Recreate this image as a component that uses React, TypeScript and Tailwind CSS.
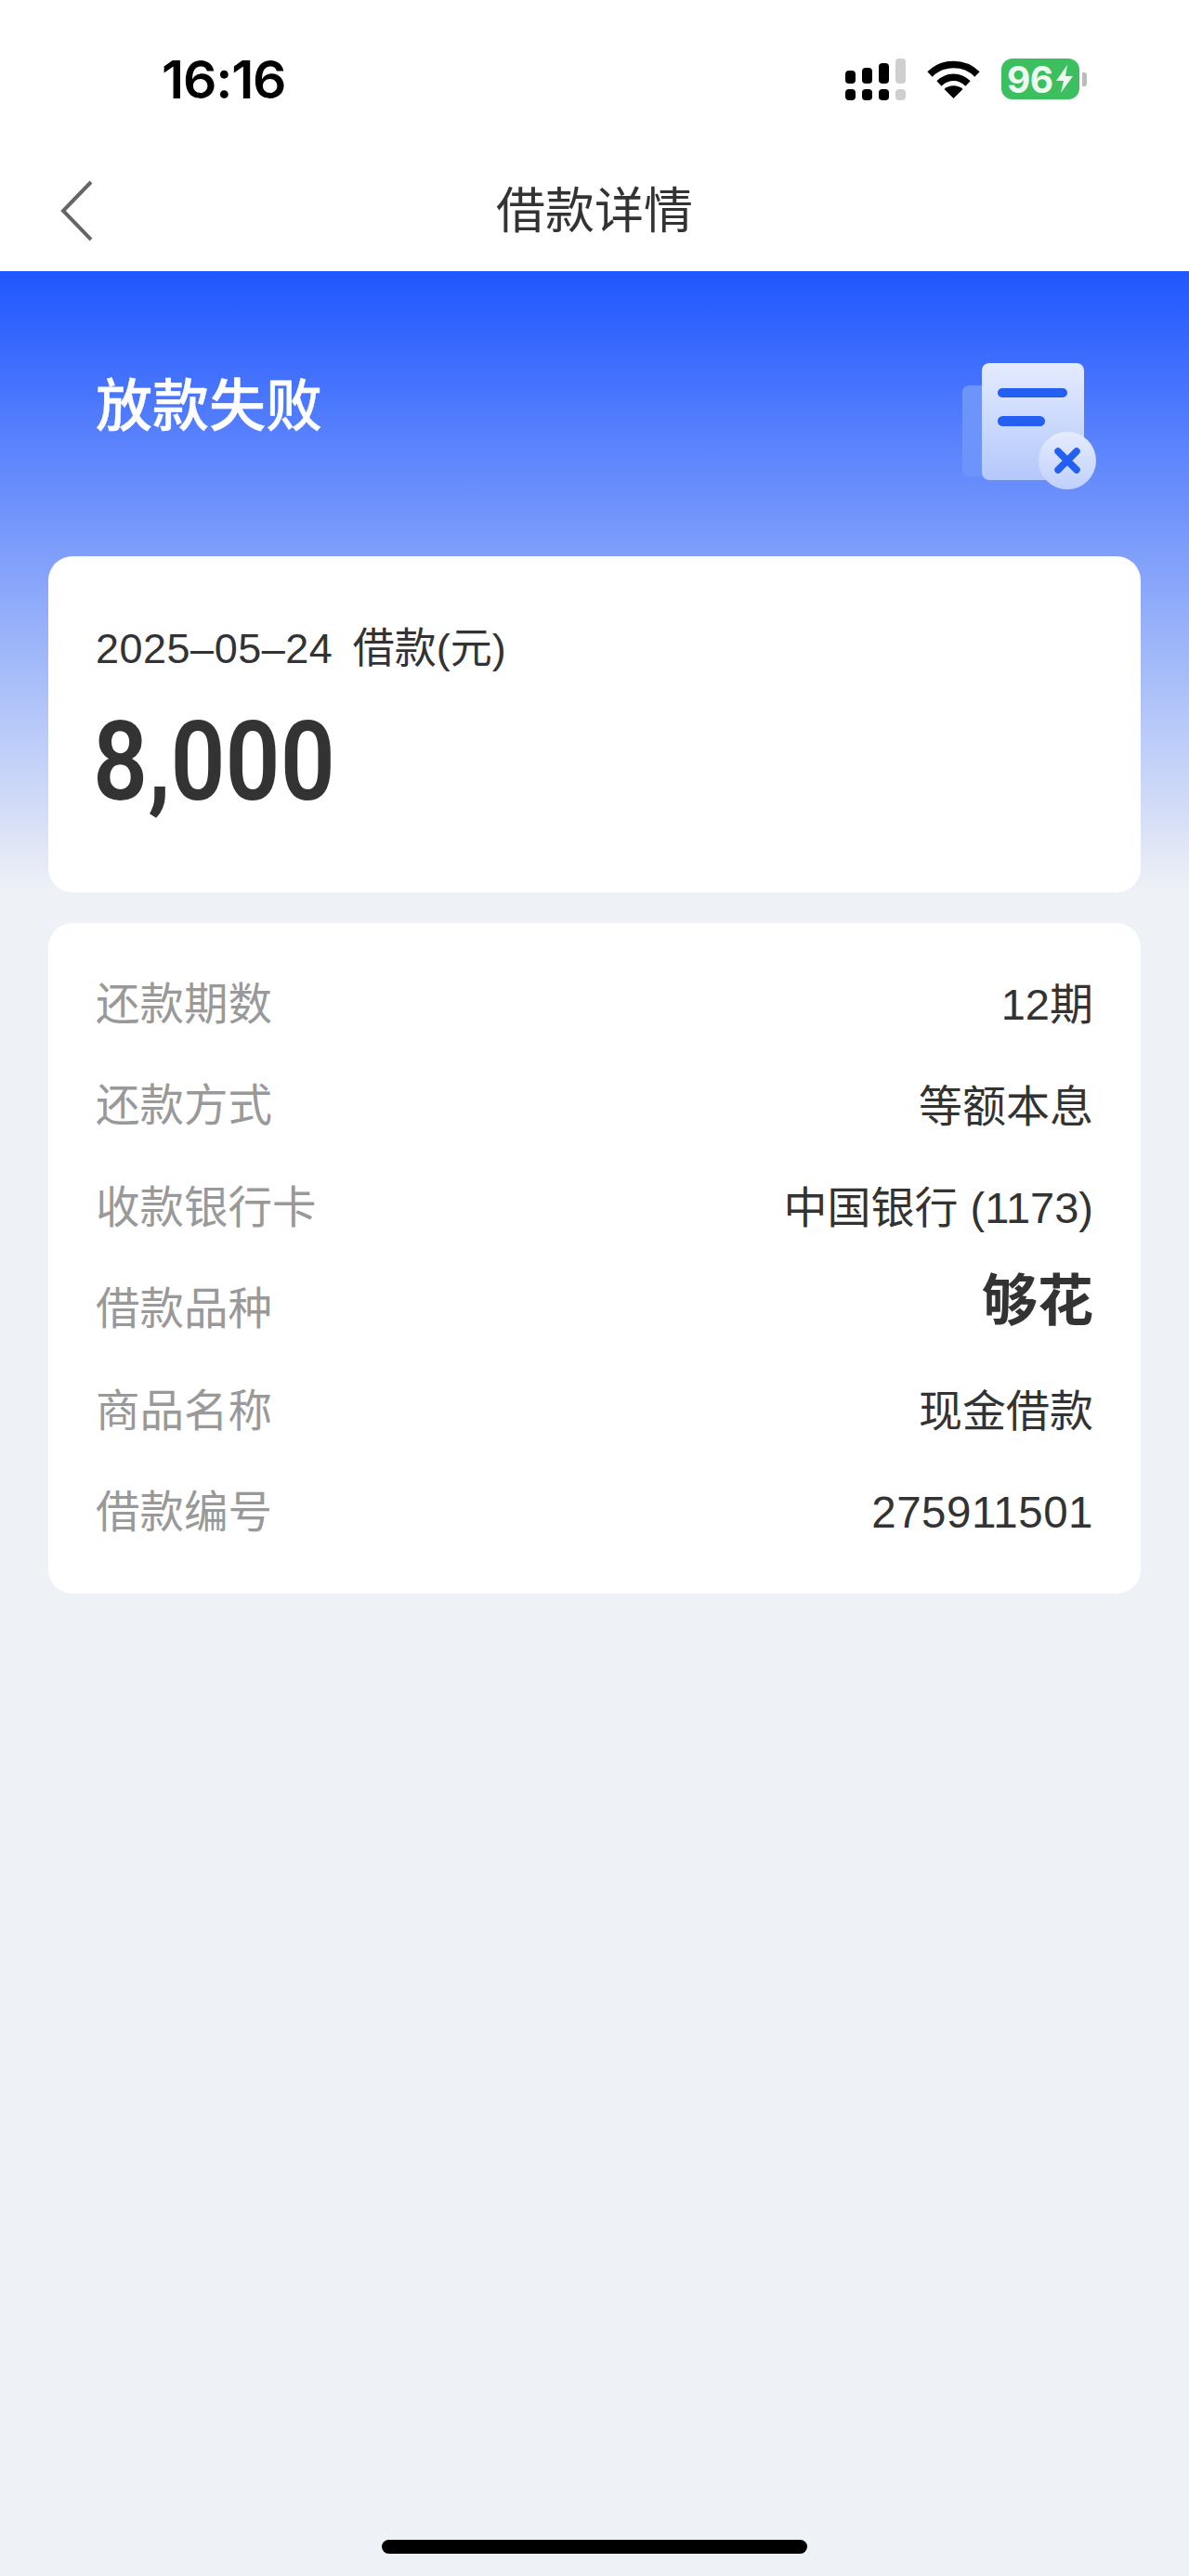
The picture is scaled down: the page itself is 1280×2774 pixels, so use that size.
const rows = [
  { label: "还款期数", value: "12期" },
  { label: "还款方式", value: "等额本息" },
  { label: "收款银行卡", value: "中国银行 (1173)" },
  { label: "借款品种", value: "够花", brand: true },
  { label: "商品名称", value: "现金借款" },
  { label: "借款编号", value: "275911501", digits: true },
];

function SignalIcon() {
  return (
    <svg width="65" height="45" viewBox="0 0 65 45">
      <rect x="0" y="13" width="11" height="14" rx="4" fill="#000" />
      <rect x="18" y="10" width="11" height="17" rx="4" fill="#000" />
      <rect x="36" y="5" width="11" height="22" rx="4" fill="#000" />
      <rect x="54" y="0" width="11" height="27" rx="4" fill="#cfcfcf" />
      <rect x="0" y="33" width="11" height="12" rx="4" fill="#000" />
      <rect x="18" y="33" width="11" height="12" rx="4" fill="#000" />
      <rect x="36" y="33" width="11" height="12" rx="4" fill="#000" />
      <rect x="54" y="33" width="11" height="12" rx="4" fill="#cfcfcf" />
    </svg>
  );
}

function WifiIcon() {
  return (
    <svg width="57" height="41" viewBox="0 0 57 41" fill="none">
      <path d="M3 15 C17 1 40 1 54 15" stroke="#000" strokeWidth="7.5" />
      <path d="M13 25 C22 16 35 16 44 25" stroke="#000" strokeWidth="7.5" />
      <path d="M28.5 41 L18.5 31 C24 26 33 26 38.5 31 Z" fill="#000" />
    </svg>
  );
}

function BatteryIcon() {
  return (
    <div className="flex items-center gap-[3px]">
      <div className="flex h-[44px] w-[84px] items-center rounded-[12px] bg-[#3cbf5e] pl-[6px]">
        <span className="font-['Inter',sans-serif] text-[39px] leading-none font-bold tracking-[-0.5px] text-[#eef9f0]">96</span>
        <svg width="20" height="30" viewBox="0 0 20 30" className="ml-[2px]">
          <path d="M13 0 L1 17 H9 L6 30 L19 12 H11 Z" fill="#eef9f0" />
        </svg>
      </div>
      <div className="h-[15px] w-[5px] rounded-r-[3px] bg-[#b9bdba]" />
    </div>
  );
}

function FailIcon() {
  return (
    <svg width="150" height="142" viewBox="0 0 150 142">
      <defs>
        <linearGradient id="doc" x1="0" y1="0" x2="0" y2="1">
          <stop offset="0" stopColor="#e4ebfe" />
          <stop offset="1" stopColor="#b4c8fb" />
        </linearGradient>
        <linearGradient id="badge" x1="0" y1="0" x2="0" y2="1">
          <stop offset="0" stopColor="#e6ecfe" />
          <stop offset="1" stopColor="#bfd0fc" />
        </linearGradient>
      </defs>
      <rect x="4" y="27" width="50" height="98" rx="7" fill="#6d94fb" />
      <rect x="25" y="3" width="110" height="126" rx="8" fill="url(#doc)" />
      <rect x="42" y="30" width="75" height="10" rx="5" fill="#2360f2" />
      <rect x="42" y="60" width="51" height="11" rx="5.5" fill="#2360f2" />
      <circle cx="117" cy="108" r="31" fill="url(#badge)" />
      <path d="M107 98 L127 118 M127 98 L107 118" stroke="#2360f2" strokeWidth="7.5" strokeLinecap="round" />
    </svg>
  );
}

export default function App() {
  return (
    <div className="flex min-h-[2774px] flex-col bg-[#eef1f6] font-['Liberation_Sans','Noto_Sans_CJK_SC',sans-serif]">
      <header className="bg-white">
        <div className="flex h-[170px] items-center pr-[110px] pl-[174px]">
          <span className="font-['Inter',sans-serif] text-[57px] leading-none font-semibold tracking-[-1.2px] text-black">16:16</span>
          <div className="ml-auto flex items-center gap-[23px]">
            <SignalIcon />
            <WifiIcon />
            <BatteryIcon />
          </div>
        </div>
        <div className="grid h-[122px] grid-cols-[1fr_auto_1fr] items-center pb-[8px]">
          <svg width="36" height="66" viewBox="0 0 36 66" fill="none" className="ml-[65px]">
            <path d="M33 2 L3 33 L33 64" stroke="#666" strokeWidth="4" />
          </svg>
          <h1 className="text-[53px] leading-none font-normal text-[#333]">借款详情</h1>
        </div>
      </header>

      <main className="flex flex-1 flex-col bg-[linear-gradient(180deg,#1f56ff_0px,#7a9bfb_288px,#eef1f6_668px)] px-[52px]">
        <section className="flex h-[307px] items-start justify-between pl-[51px]">
          <h2 className="mt-[110px] text-[61px] leading-[72px] font-medium text-white [-webkit-text-stroke:0.4px_white]">放款失败</h2>
          <div className="mt-[96px] pr-[46px]">
            <FailIcon />
          </div>
        </section>

        <section className="h-[362px] rounded-[26px] bg-white pt-[72px] pl-[51px]">
          <p className="text-[45px] leading-[56px] text-[#333]">
            <span className="mr-[9px] tracking-[0.5px]">2025–05–24</span> 借款(元)
          </p>
          <p className="mt-[34px] -ml-[3px] origin-left scale-x-[0.87] font-['Roboto',sans-serif] text-[119px] leading-[119px] font-semibold text-[#333]">8,000</p>
        </section>

        <section className="mt-[33px] rounded-[26px] bg-white px-[51px] pt-[33px] pb-[33px]">
          {rows.map((row) => (
            <div key={row.label} className="flex h-[109.4px] items-center justify-between">
              <span className="text-[47.5px] leading-none text-[#999]">{row.label}</span>
              {row.brand ? (
                <span className="mb-[16px] text-[60px] leading-none font-bold text-[#333]">{row.value}</span>
              ) : row.digits ? (
                <span className="text-[47.5px] leading-none tracking-[0.5px] text-[#333]">{row.value}</span>
              ) : (
                <span className="text-[47px] leading-none text-[#333]">{row.value}</span>
              )}
            </div>
          ))}
        </section>

        <div className="mt-auto mb-[24px] flex justify-center">
          <div className="h-[15px] w-[458px] rounded-full bg-black" />
        </div>
      </main>
    </div>
  );
}
